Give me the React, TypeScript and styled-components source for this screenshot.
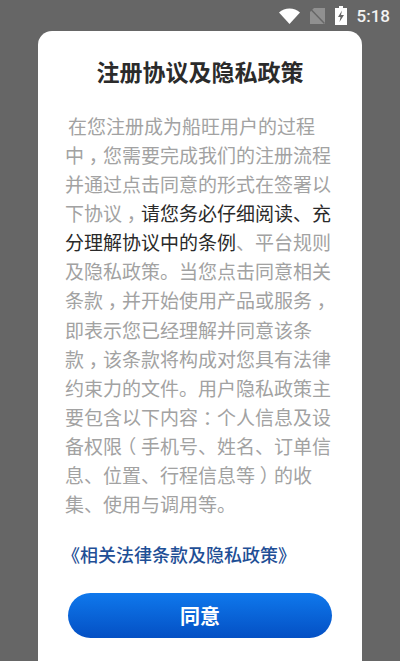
import { createGlobalStyle } from "styled-components";
import styled from "styled-components";

const GlobalStyle = createGlobalStyle`
  html, body {
    margin: 0;
    height: 100%;
    background: #666666;
    font-family: "Liberation Sans", "Noto Sans CJK SC", sans-serif;
  }
`;

function App() {
  return (
    <>
      <GlobalStyle />
      <Screen>
        <StatusBar>
          <svg width="21" height="16" viewBox="0 0 21 16">
            <path d="M0 4.500C3 1.800 6.500 0.500 10.500 0.500s7.500 1.300 10.500 4L10.500 16z" fill="#fff" />
          </svg>
          <svg width="15" height="16" viewBox="0 0 15 16">
            <path d="M4 0h11v16H0V4z" fill="#909090" />
            <path d="M0.500 1l14 14.500" stroke="#666" strokeWidth="1.500" />
          </svg>
          <svg width="12" height="19" viewBox="0 0 12 19">
            <path d="M4 0h4v2h4v17H0V2h4z" fill="#fff" />
            <path d="M7 4.500L3 11h2.500L4.500 16 9 9H6z" fill="#666" />
          </svg>
          <Clock>5:18</Clock>
        </StatusBar>
        <Card>
          <Title>注册协议及隐私政策</Title>
          <Body>
            <Line $indent>在您注册成为船旺用户的过程</Line>
            <Line>中<Mark>，</Mark>您需要完成我们的注册流程</Line>
            <Line>并通过点击同意的形式在签署以</Line>
            <Line>下协议<Mark>，</Mark><Strong>请您务必仔细阅读、充</Strong></Line>
            <Line><Strong>分理解协议中的条例</Strong>、平台规则</Line>
            <Line>及隐私政策。当您点击同意相关</Line>
            <Line>条款<Mark>，</Mark>并开始使用产品或服务<Mark>，</Mark></Line>
            <Line>即表示您已经理解并同意该条</Line>
            <Line>款<Mark>，</Mark>该条款将构成对您具有法律</Line>
            <Line>约束力的文件。用户隐私政策主</Line>
            <Line>要包含以下内容<Mark>：</Mark>个人信息及设</Line>
            <Line>备权限<Mark>（</Mark>手机号、姓名、订单信</Line>
            <Line>息、位置、行程信息等<Mark>）</Mark>的收</Line>
            <Line>集、使用与调用等。</Line>
          </Body>
          <PolicyLink>《相关法律条款及隐私政策》</PolicyLink>
          <Footer>
            <AgreeButton>同意</AgreeButton>
          </Footer>
        </Card>
      </Screen>
    </>
  );
}

const Screen = styled("div")`
  width: 400px;
  height: 661px;
  display: flex;
  flex-direction: column;
  overflow: hidden;
  background: #666666;
`;

const StatusBar = styled("div")`
  height: 31px;
  flex-shrink: 0;
  display: flex;
  align-items: center;
  justify-content: flex-end;
  gap: 10px;
  padding: 0 10px 0 0;
  box-sizing: border-box;
`;

const Clock = styled("span")`
  color: #f2f2f2;
  font-family: "Roboto", sans-serif;
  font-size: 17px;
  font-weight: 500;
`;

const Card = styled("div")`
  flex: 1;
  margin: 0 38px;
  background: #ffffff;
  border-radius: 14px 14px 0 0;
  display: flex;
  flex-direction: column;
`;

const Title = styled("div")`
  margin-top: 27px;
  text-align: center;
  color: #2b2b2b;
  font-size: 23px;
  line-height: 30px;
  font-weight: 700;
`;

const Body = styled("div")`
  margin-top: 25px;
  padding-left: 27px;
  color: #a2a2a2;
  font-size: 19px;
  line-height: 29.080px;
`;

const Line = styled("div")<{ $indent?: boolean }>`
  white-space: nowrap;
  padding-left: ${({ $indent }) => ($indent ? "3px" : "0")};
`;

const Strong = styled("span")`
  color: #2a2a2a;
`;

// punctuation sits in the middle of its cell here, so trim it to half width and pad it back
const Mark = styled("span")`
  display: inline-block;
  font-feature-settings: "halt";
  padding: 0 0.25em;
`;

const PolicyLink = styled("div")`
  margin-top: 23px;
  padding-left: 24px;
  color: #1f4f96;
  font-size: 18px;
  line-height: 26px;
  font-weight: 500;
`;

const Footer = styled("div")`
  margin-top: 24px;
  padding: 0 30px;
`;

const AgreeButton = styled("button")`
  width: 100%;
  height: 45px;
  border: 0;
  border-radius: 23px;
  background: linear-gradient(180deg, #0f78ec 0%, #0450c4 100%);
  color: #ffffff;
  font-family: inherit;
  font-size: 20px;
  font-weight: 700;
  padding: 0;
`;

export default App;
